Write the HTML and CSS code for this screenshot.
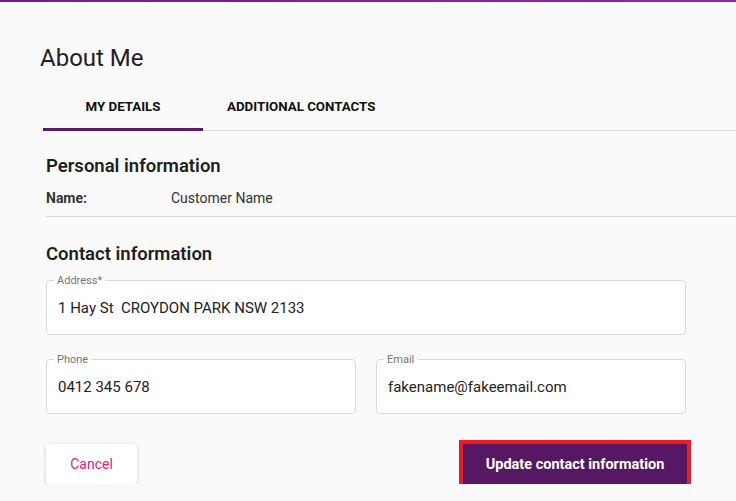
FILE: index.html
```html
<!DOCTYPE html>
<html>
<head>
<meta charset="utf-8">
<link rel="stylesheet" href="styles.css">
</head>
<body>
<div class="topbar"></div>
<main class="page">
  <h1 class="title">About Me</h1>
  <nav class="tabs">
    <div class="tab active">MY DETAILS</div>
    <div class="tab">ADDITIONAL CONTACTS</div>
  </nav>
  <section class="content">
    <h2 class="section-title">Personal information</h2>
    <div class="info-row">
      <span class="info-label">Name:</span>
      <span class="info-value">Customer Name</span>
    </div>
    <div class="divider"></div>
    <h2 class="section-title contact">Contact information</h2>
    <div class="form">
      <fieldset class="field">
        <legend>Address*</legend>
        <div class="value">1 Hay St&nbsp; CROYDON PARK NSW 2133</div>
      </fieldset>
      <div class="field-row">
        <fieldset class="field">
          <legend>Phone</legend>
          <div class="value">0412 345 678</div>
        </fieldset>
        <fieldset class="field">
          <legend>Email</legend>
          <div class="value">fakename@fakeemail.com</div>
        </fieldset>
      </div>
      <div class="actions">
        <button class="btn btn-cancel">Cancel</button>
        <button class="btn btn-primary">Update contact information</button>
      </div>
    </div>
  </section>
</main>
</body>
</html>
```
FILE: styles.css
```css
* { box-sizing: border-box; }
html, body {
  margin: 0;
  background: #fafafa;
  font-family: Roboto, "Liberation Sans", Arial, sans-serif;
  color: #222;
}
.topbar {
  height: 2px;
  background: linear-gradient(90deg, #6a2181, #8b2c9c);
}
.page {
  padding: 42px 0 0 40px;
}
.title {
  margin: 0;
  font-size: 24px;
  font-weight: 400;
  line-height: 28px;
  color: #222;
}
.tabs {
  display: flex;
  margin: 14px 0 0 3px;
  border-bottom: 1px solid #dcdcdc;
}
.tab {
  height: 45px;
  display: flex;
  align-items: center;
  justify-content: center;
  font-size: 13.3px;
  font-weight: 700;
  color: #111;
  padding: 0 24px 1px;
  border-bottom: 3px solid transparent;
  margin-bottom: -1px;
}
.tab.active {
  width: 160px;
  border-bottom-color: #5c1a6a;
}
.content {
  padding: 0 0 0 6px;
}
.section-title {
  margin: 0;
  font-size: 18.5px;
  font-weight: 600;
  line-height: 22px;
  color: #1f1f1f;
  padding-top: 24px;
}
.section-title.contact {
  padding-top: 26px;
}
.info-row {
  display: flex;
  align-items: center;
  height: 22px;
  margin-top: 10px;
  font-size: 14px;
}
.info-label {
  width: 125px;
  font-weight: 700;
  color: #333;
}
.info-value {
  color: #333;
}
.divider {
  height: 1px;
  background: #d8d8d8;
  margin-top: 7px;
}
.form {
  width: 640px;
  margin-top: 9px;
}
.field {
  margin: 0;
  padding: 0 11px;
  border: 1px solid #dadada;
  border-radius: 4px;
  background: #fff;
  height: 61px;
  min-width: 0;
}
.field legend {
  font-size: 11px;
  color: #767676;
  padding: 0 3px;
  margin-left: -4px;
  line-height: 12px;
  position: relative;
  top: 1px;
}
.field .value {
  font-size: 15px;
  color: #222;
  line-height: 20px;
  padding-top: 12px;
}
.field-row {
  display: grid;
  grid-template-columns: 1fr 1fr;
  gap: 20px;
  margin-top: 18px;
}
.actions {
  display: flex;
  justify-content: space-between;
  align-items: center;
  margin-top: 30px;
}
.btn {
  height: 40px;
  border: none;
  border-radius: 4px;
  font-family: Roboto, "Liberation Sans", Arial, sans-serif;
  font-size: 14px;
  cursor: pointer;
}
.btn-cancel {
  width: 91px;
  background: #fff;
  color: #e6197f;
  box-shadow: 0 1px 4px rgba(0,0,0,0.18);
}
.btn-primary {
  width: 224px;
  margin-right: -1px;
  background: #561763;
  color: #fff;
  font-size: 14.5px;
  font-weight: 700;
  border-radius: 0;
  outline: 4px solid #ec1c24;
}
```
